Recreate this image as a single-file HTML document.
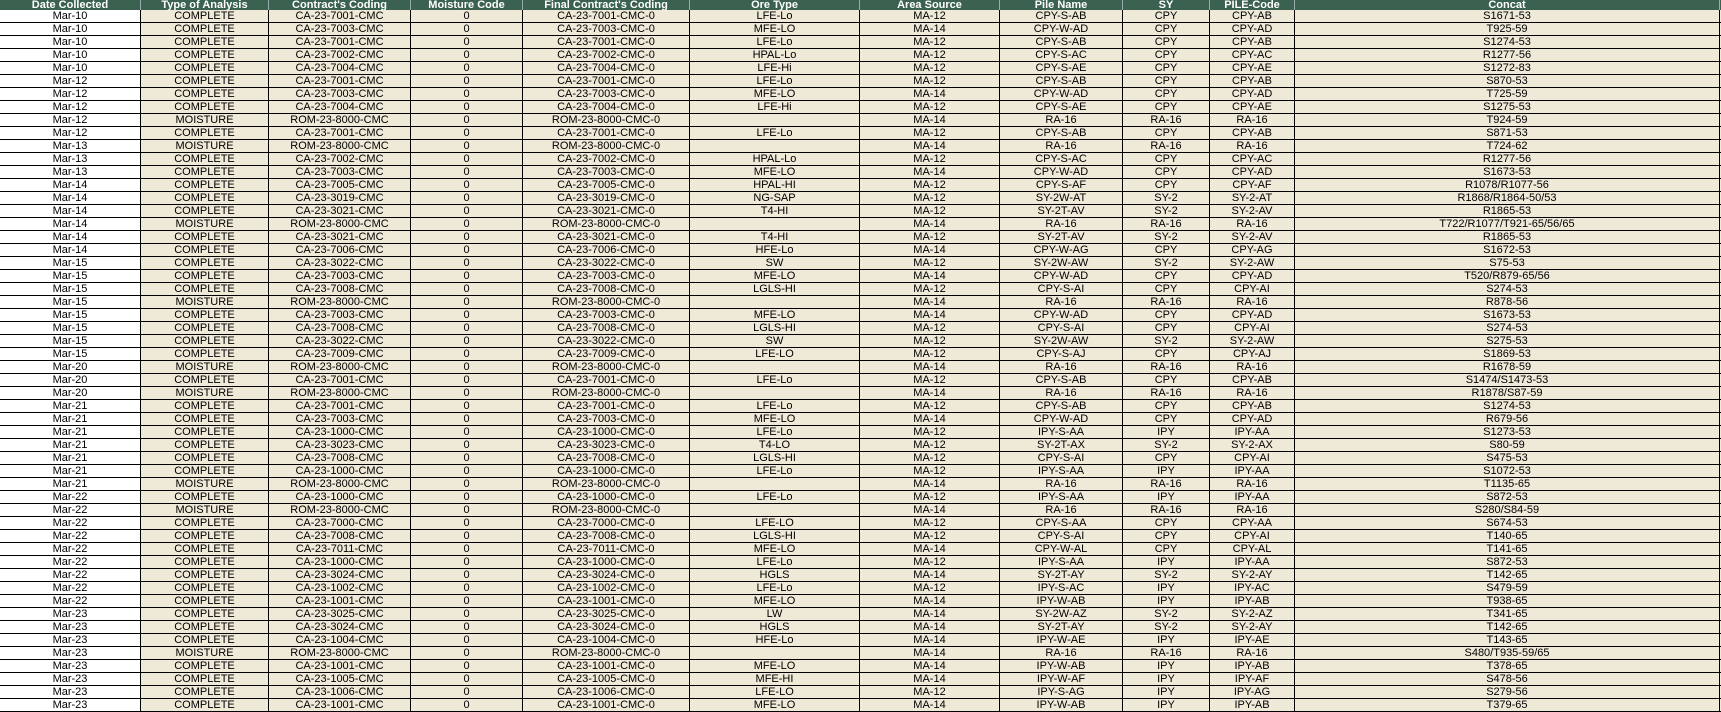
<!DOCTYPE html>
<html><head><meta charset="utf-8"><style>
body{margin:0;width:1721px;height:701px;overflow:hidden;background:#fff;font-family:"Liberation Sans",sans-serif;font-size:11px;color:#000}
.r{display:flex;height:13px;box-sizing:border-box;border-bottom:1px solid #000;background:#efe9d8}
.r span{display:block;box-sizing:border-box;border-right:1px solid #000;text-align:center;line-height:12px;white-space:nowrap;overflow:hidden}
.r span:first-child{background:#fff}
.h{height:10px;background:#3b6151;border-bottom:none}
.h span{background:#3b6151!important;color:#fff;font-weight:bold;line-height:10px;border-right:1px solid #9aa}
.r span:nth-child(1){width:141px}.r span:nth-child(2){width:128px}.r span:nth-child(3){width:142px}.r span:nth-child(4){width:112px}.r span:nth-child(5){width:167px}.r span:nth-child(6){width:170px}.r span:nth-child(7){width:140px}.r span:nth-child(8){width:123px}.r span:nth-child(9){width:87px}.r span:nth-child(10){width:85px}.r span:nth-child(11){width:425px}
</style></head><body>
<div class="r h"><span>Date Collected</span><span>Type of Analysis</span><span>Contract's Coding</span><span>Moisture Code</span><span>Final Contract's Coding</span><span>Ore Type</span><span>Area Source</span><span>Pile Name</span><span>SY</span><span>PILE-Code</span><span>Concat</span></div>
<div class="r"><span>Mar-10</span><span>COMPLETE</span><span>CA-23-7001-CMC</span><span>0</span><span>CA-23-7001-CMC-0</span><span>LFE-Lo</span><span>MA-12</span><span>CPY-S-AB</span><span>CPY</span><span>CPY-AB</span><span>S1671-53</span></div>
<div class="r"><span>Mar-10</span><span>COMPLETE</span><span>CA-23-7003-CMC</span><span>0</span><span>CA-23-7003-CMC-0</span><span>MFE-LO</span><span>MA-14</span><span>CPY-W-AD</span><span>CPY</span><span>CPY-AD</span><span>T925-59</span></div>
<div class="r"><span>Mar-10</span><span>COMPLETE</span><span>CA-23-7001-CMC</span><span>0</span><span>CA-23-7001-CMC-0</span><span>LFE-Lo</span><span>MA-12</span><span>CPY-S-AB</span><span>CPY</span><span>CPY-AB</span><span>S1274-53</span></div>
<div class="r"><span>Mar-10</span><span>COMPLETE</span><span>CA-23-7002-CMC</span><span>0</span><span>CA-23-7002-CMC-0</span><span>HPAL-Lo</span><span>MA-12</span><span>CPY-S-AC</span><span>CPY</span><span>CPY-AC</span><span>R1277-56</span></div>
<div class="r"><span>Mar-10</span><span>COMPLETE</span><span>CA-23-7004-CMC</span><span>0</span><span>CA-23-7004-CMC-0</span><span>LFE-Hi</span><span>MA-12</span><span>CPY-S-AE</span><span>CPY</span><span>CPY-AE</span><span>S1272-83</span></div>
<div class="r"><span>Mar-12</span><span>COMPLETE</span><span>CA-23-7001-CMC</span><span>0</span><span>CA-23-7001-CMC-0</span><span>LFE-Lo</span><span>MA-12</span><span>CPY-S-AB</span><span>CPY</span><span>CPY-AB</span><span>S870-53</span></div>
<div class="r"><span>Mar-12</span><span>COMPLETE</span><span>CA-23-7003-CMC</span><span>0</span><span>CA-23-7003-CMC-0</span><span>MFE-LO</span><span>MA-14</span><span>CPY-W-AD</span><span>CPY</span><span>CPY-AD</span><span>T725-59</span></div>
<div class="r"><span>Mar-12</span><span>COMPLETE</span><span>CA-23-7004-CMC</span><span>0</span><span>CA-23-7004-CMC-0</span><span>LFE-Hi</span><span>MA-12</span><span>CPY-S-AE</span><span>CPY</span><span>CPY-AE</span><span>S1275-53</span></div>
<div class="r"><span>Mar-12</span><span>MOISTURE</span><span>ROM-23-8000-CMC</span><span>0</span><span>ROM-23-8000-CMC-0</span><span></span><span>MA-14</span><span>RA-16</span><span>RA-16</span><span>RA-16</span><span>T924-59</span></div>
<div class="r"><span>Mar-12</span><span>COMPLETE</span><span>CA-23-7001-CMC</span><span>0</span><span>CA-23-7001-CMC-0</span><span>LFE-Lo</span><span>MA-12</span><span>CPY-S-AB</span><span>CPY</span><span>CPY-AB</span><span>S871-53</span></div>
<div class="r"><span>Mar-13</span><span>MOISTURE</span><span>ROM-23-8000-CMC</span><span>0</span><span>ROM-23-8000-CMC-0</span><span></span><span>MA-14</span><span>RA-16</span><span>RA-16</span><span>RA-16</span><span>T724-62</span></div>
<div class="r"><span>Mar-13</span><span>COMPLETE</span><span>CA-23-7002-CMC</span><span>0</span><span>CA-23-7002-CMC-0</span><span>HPAL-Lo</span><span>MA-12</span><span>CPY-S-AC</span><span>CPY</span><span>CPY-AC</span><span>R1277-56</span></div>
<div class="r"><span>Mar-13</span><span>COMPLETE</span><span>CA-23-7003-CMC</span><span>0</span><span>CA-23-7003-CMC-0</span><span>MFE-LO</span><span>MA-14</span><span>CPY-W-AD</span><span>CPY</span><span>CPY-AD</span><span>S1673-53</span></div>
<div class="r"><span>Mar-14</span><span>COMPLETE</span><span>CA-23-7005-CMC</span><span>0</span><span>CA-23-7005-CMC-0</span><span>HPAL-HI</span><span>MA-12</span><span>CPY-S-AF</span><span>CPY</span><span>CPY-AF</span><span>R1078/R1077-56</span></div>
<div class="r"><span>Mar-14</span><span>COMPLETE</span><span>CA-23-3019-CMC</span><span>0</span><span>CA-23-3019-CMC-0</span><span>NG-SAP</span><span>MA-12</span><span>SY-2W-AT</span><span>SY-2</span><span>SY-2-AT</span><span>R1868/R1864-50/53</span></div>
<div class="r"><span>Mar-14</span><span>COMPLETE</span><span>CA-23-3021-CMC</span><span>0</span><span>CA-23-3021-CMC-0</span><span>T4-HI</span><span>MA-12</span><span>SY-2T-AV</span><span>SY-2</span><span>SY-2-AV</span><span>R1865-53</span></div>
<div class="r"><span>Mar-14</span><span>MOISTURE</span><span>ROM-23-8000-CMC</span><span>0</span><span>ROM-23-8000-CMC-0</span><span></span><span>MA-14</span><span>RA-16</span><span>RA-16</span><span>RA-16</span><span>T722/R1077/T921-65/56/65</span></div>
<div class="r"><span>Mar-14</span><span>COMPLETE</span><span>CA-23-3021-CMC</span><span>0</span><span>CA-23-3021-CMC-0</span><span>T4-HI</span><span>MA-12</span><span>SY-2T-AV</span><span>SY-2</span><span>SY-2-AV</span><span>R1865-53</span></div>
<div class="r"><span>Mar-14</span><span>COMPLETE</span><span>CA-23-7006-CMC</span><span>0</span><span>CA-23-7006-CMC-0</span><span>HFE-Lo</span><span>MA-14</span><span>CPY-W-AG</span><span>CPY</span><span>CPY-AG</span><span>S1672-53</span></div>
<div class="r"><span>Mar-15</span><span>COMPLETE</span><span>CA-23-3022-CMC</span><span>0</span><span>CA-23-3022-CMC-0</span><span>SW</span><span>MA-12</span><span>SY-2W-AW</span><span>SY-2</span><span>SY-2-AW</span><span>S75-53</span></div>
<div class="r"><span>Mar-15</span><span>COMPLETE</span><span>CA-23-7003-CMC</span><span>0</span><span>CA-23-7003-CMC-0</span><span>MFE-LO</span><span>MA-14</span><span>CPY-W-AD</span><span>CPY</span><span>CPY-AD</span><span>T520/R879-65/56</span></div>
<div class="r"><span>Mar-15</span><span>COMPLETE</span><span>CA-23-7008-CMC</span><span>0</span><span>CA-23-7008-CMC-0</span><span>LGLS-HI</span><span>MA-12</span><span>CPY-S-AI</span><span>CPY</span><span>CPY-AI</span><span>S274-53</span></div>
<div class="r"><span>Mar-15</span><span>MOISTURE</span><span>ROM-23-8000-CMC</span><span>0</span><span>ROM-23-8000-CMC-0</span><span></span><span>MA-14</span><span>RA-16</span><span>RA-16</span><span>RA-16</span><span>R878-56</span></div>
<div class="r"><span>Mar-15</span><span>COMPLETE</span><span>CA-23-7003-CMC</span><span>0</span><span>CA-23-7003-CMC-0</span><span>MFE-LO</span><span>MA-14</span><span>CPY-W-AD</span><span>CPY</span><span>CPY-AD</span><span>S1673-53</span></div>
<div class="r"><span>Mar-15</span><span>COMPLETE</span><span>CA-23-7008-CMC</span><span>0</span><span>CA-23-7008-CMC-0</span><span>LGLS-HI</span><span>MA-12</span><span>CPY-S-AI</span><span>CPY</span><span>CPY-AI</span><span>S274-53</span></div>
<div class="r"><span>Mar-15</span><span>COMPLETE</span><span>CA-23-3022-CMC</span><span>0</span><span>CA-23-3022-CMC-0</span><span>SW</span><span>MA-12</span><span>SY-2W-AW</span><span>SY-2</span><span>SY-2-AW</span><span>S275-53</span></div>
<div class="r"><span>Mar-15</span><span>COMPLETE</span><span>CA-23-7009-CMC</span><span>0</span><span>CA-23-7009-CMC-0</span><span>LFE-LO</span><span>MA-12</span><span>CPY-S-AJ</span><span>CPY</span><span>CPY-AJ</span><span>S1869-53</span></div>
<div class="r"><span>Mar-20</span><span>MOISTURE</span><span>ROM-23-8000-CMC</span><span>0</span><span>ROM-23-8000-CMC-0</span><span></span><span>MA-14</span><span>RA-16</span><span>RA-16</span><span>RA-16</span><span>R1678-59</span></div>
<div class="r"><span>Mar-20</span><span>COMPLETE</span><span>CA-23-7001-CMC</span><span>0</span><span>CA-23-7001-CMC-0</span><span>LFE-Lo</span><span>MA-12</span><span>CPY-S-AB</span><span>CPY</span><span>CPY-AB</span><span>S1474/S1473-53</span></div>
<div class="r"><span>Mar-20</span><span>MOISTURE</span><span>ROM-23-8000-CMC</span><span>0</span><span>ROM-23-8000-CMC-0</span><span></span><span>MA-14</span><span>RA-16</span><span>RA-16</span><span>RA-16</span><span>R1878/S87-59</span></div>
<div class="r"><span>Mar-21</span><span>COMPLETE</span><span>CA-23-7001-CMC</span><span>0</span><span>CA-23-7001-CMC-0</span><span>LFE-Lo</span><span>MA-12</span><span>CPY-S-AB</span><span>CPY</span><span>CPY-AB</span><span>S1274-53</span></div>
<div class="r"><span>Mar-21</span><span>COMPLETE</span><span>CA-23-7003-CMC</span><span>0</span><span>CA-23-7003-CMC-0</span><span>MFE-LO</span><span>MA-14</span><span>CPY-W-AD</span><span>CPY</span><span>CPY-AD</span><span>R679-56</span></div>
<div class="r"><span>Mar-21</span><span>COMPLETE</span><span>CA-23-1000-CMC</span><span>0</span><span>CA-23-1000-CMC-0</span><span>LFE-Lo</span><span>MA-12</span><span>IPY-S-AA</span><span>IPY</span><span>IPY-AA</span><span>S1273-53</span></div>
<div class="r"><span>Mar-21</span><span>COMPLETE</span><span>CA-23-3023-CMC</span><span>0</span><span>CA-23-3023-CMC-0</span><span>T4-LO</span><span>MA-12</span><span>SY-2T-AX</span><span>SY-2</span><span>SY-2-AX</span><span>S80-59</span></div>
<div class="r"><span>Mar-21</span><span>COMPLETE</span><span>CA-23-7008-CMC</span><span>0</span><span>CA-23-7008-CMC-0</span><span>LGLS-HI</span><span>MA-12</span><span>CPY-S-AI</span><span>CPY</span><span>CPY-AI</span><span>S475-53</span></div>
<div class="r"><span>Mar-21</span><span>COMPLETE</span><span>CA-23-1000-CMC</span><span>0</span><span>CA-23-1000-CMC-0</span><span>LFE-Lo</span><span>MA-12</span><span>IPY-S-AA</span><span>IPY</span><span>IPY-AA</span><span>S1072-53</span></div>
<div class="r"><span>Mar-21</span><span>MOISTURE</span><span>ROM-23-8000-CMC</span><span>0</span><span>ROM-23-8000-CMC-0</span><span></span><span>MA-14</span><span>RA-16</span><span>RA-16</span><span>RA-16</span><span>T1135-65</span></div>
<div class="r"><span>Mar-22</span><span>COMPLETE</span><span>CA-23-1000-CMC</span><span>0</span><span>CA-23-1000-CMC-0</span><span>LFE-Lo</span><span>MA-12</span><span>IPY-S-AA</span><span>IPY</span><span>IPY-AA</span><span>S872-53</span></div>
<div class="r"><span>Mar-22</span><span>MOISTURE</span><span>ROM-23-8000-CMC</span><span>0</span><span>ROM-23-8000-CMC-0</span><span></span><span>MA-14</span><span>RA-16</span><span>RA-16</span><span>RA-16</span><span>S280/S84-59</span></div>
<div class="r"><span>Mar-22</span><span>COMPLETE</span><span>CA-23-7000-CMC</span><span>0</span><span>CA-23-7000-CMC-0</span><span>LFE-LO</span><span>MA-12</span><span>CPY-S-AA</span><span>CPY</span><span>CPY-AA</span><span>S674-53</span></div>
<div class="r"><span>Mar-22</span><span>COMPLETE</span><span>CA-23-7008-CMC</span><span>0</span><span>CA-23-7008-CMC-0</span><span>LGLS-HI</span><span>MA-12</span><span>CPY-S-AI</span><span>CPY</span><span>CPY-AI</span><span>T140-65</span></div>
<div class="r"><span>Mar-22</span><span>COMPLETE</span><span>CA-23-7011-CMC</span><span>0</span><span>CA-23-7011-CMC-0</span><span>MFE-LO</span><span>MA-14</span><span>CPY-W-AL</span><span>CPY</span><span>CPY-AL</span><span>T141-65</span></div>
<div class="r"><span>Mar-22</span><span>COMPLETE</span><span>CA-23-1000-CMC</span><span>0</span><span>CA-23-1000-CMC-0</span><span>LFE-Lo</span><span>MA-12</span><span>IPY-S-AA</span><span>IPY</span><span>IPY-AA</span><span>S872-53</span></div>
<div class="r"><span>Mar-22</span><span>COMPLETE</span><span>CA-23-3024-CMC</span><span>0</span><span>CA-23-3024-CMC-0</span><span>HGLS</span><span>MA-14</span><span>SY-2T-AY</span><span>SY-2</span><span>SY-2-AY</span><span>T142-65</span></div>
<div class="r"><span>Mar-22</span><span>COMPLETE</span><span>CA-23-1002-CMC</span><span>0</span><span>CA-23-1002-CMC-0</span><span>LFE-Lo</span><span>MA-12</span><span>IPY-S-AC</span><span>IPY</span><span>IPY-AC</span><span>S479-59</span></div>
<div class="r"><span>Mar-22</span><span>COMPLETE</span><span>CA-23-1001-CMC</span><span>0</span><span>CA-23-1001-CMC-0</span><span>MFE-LO</span><span>MA-14</span><span>IPY-W-AB</span><span>IPY</span><span>IPY-AB</span><span>T938-65</span></div>
<div class="r"><span>Mar-23</span><span>COMPLETE</span><span>CA-23-3025-CMC</span><span>0</span><span>CA-23-3025-CMC-0</span><span>LW</span><span>MA-14</span><span>SY-2W-AZ</span><span>SY-2</span><span>SY-2-AZ</span><span>T341-65</span></div>
<div class="r"><span>Mar-23</span><span>COMPLETE</span><span>CA-23-3024-CMC</span><span>0</span><span>CA-23-3024-CMC-0</span><span>HGLS</span><span>MA-14</span><span>SY-2T-AY</span><span>SY-2</span><span>SY-2-AY</span><span>T142-65</span></div>
<div class="r"><span>Mar-23</span><span>COMPLETE</span><span>CA-23-1004-CMC</span><span>0</span><span>CA-23-1004-CMC-0</span><span>HFE-Lo</span><span>MA-14</span><span>IPY-W-AE</span><span>IPY</span><span>IPY-AE</span><span>T143-65</span></div>
<div class="r"><span>Mar-23</span><span>MOISTURE</span><span>ROM-23-8000-CMC</span><span>0</span><span>ROM-23-8000-CMC-0</span><span></span><span>MA-14</span><span>RA-16</span><span>RA-16</span><span>RA-16</span><span>S480/T935-59/65</span></div>
<div class="r"><span>Mar-23</span><span>COMPLETE</span><span>CA-23-1001-CMC</span><span>0</span><span>CA-23-1001-CMC-0</span><span>MFE-LO</span><span>MA-14</span><span>IPY-W-AB</span><span>IPY</span><span>IPY-AB</span><span>T378-65</span></div>
<div class="r"><span>Mar-23</span><span>COMPLETE</span><span>CA-23-1005-CMC</span><span>0</span><span>CA-23-1005-CMC-0</span><span>MFE-HI</span><span>MA-14</span><span>IPY-W-AF</span><span>IPY</span><span>IPY-AF</span><span>S478-56</span></div>
<div class="r"><span>Mar-23</span><span>COMPLETE</span><span>CA-23-1006-CMC</span><span>0</span><span>CA-23-1006-CMC-0</span><span>LFE-LO</span><span>MA-12</span><span>IPY-S-AG</span><span>IPY</span><span>IPY-AG</span><span>S279-56</span></div>
<div class="r"><span>Mar-23</span><span>COMPLETE</span><span>CA-23-1001-CMC</span><span>0</span><span>CA-23-1001-CMC-0</span><span>MFE-LO</span><span>MA-14</span><span>IPY-W-AB</span><span>IPY</span><span>IPY-AB</span><span>T379-65</span></div>
</body></html>
